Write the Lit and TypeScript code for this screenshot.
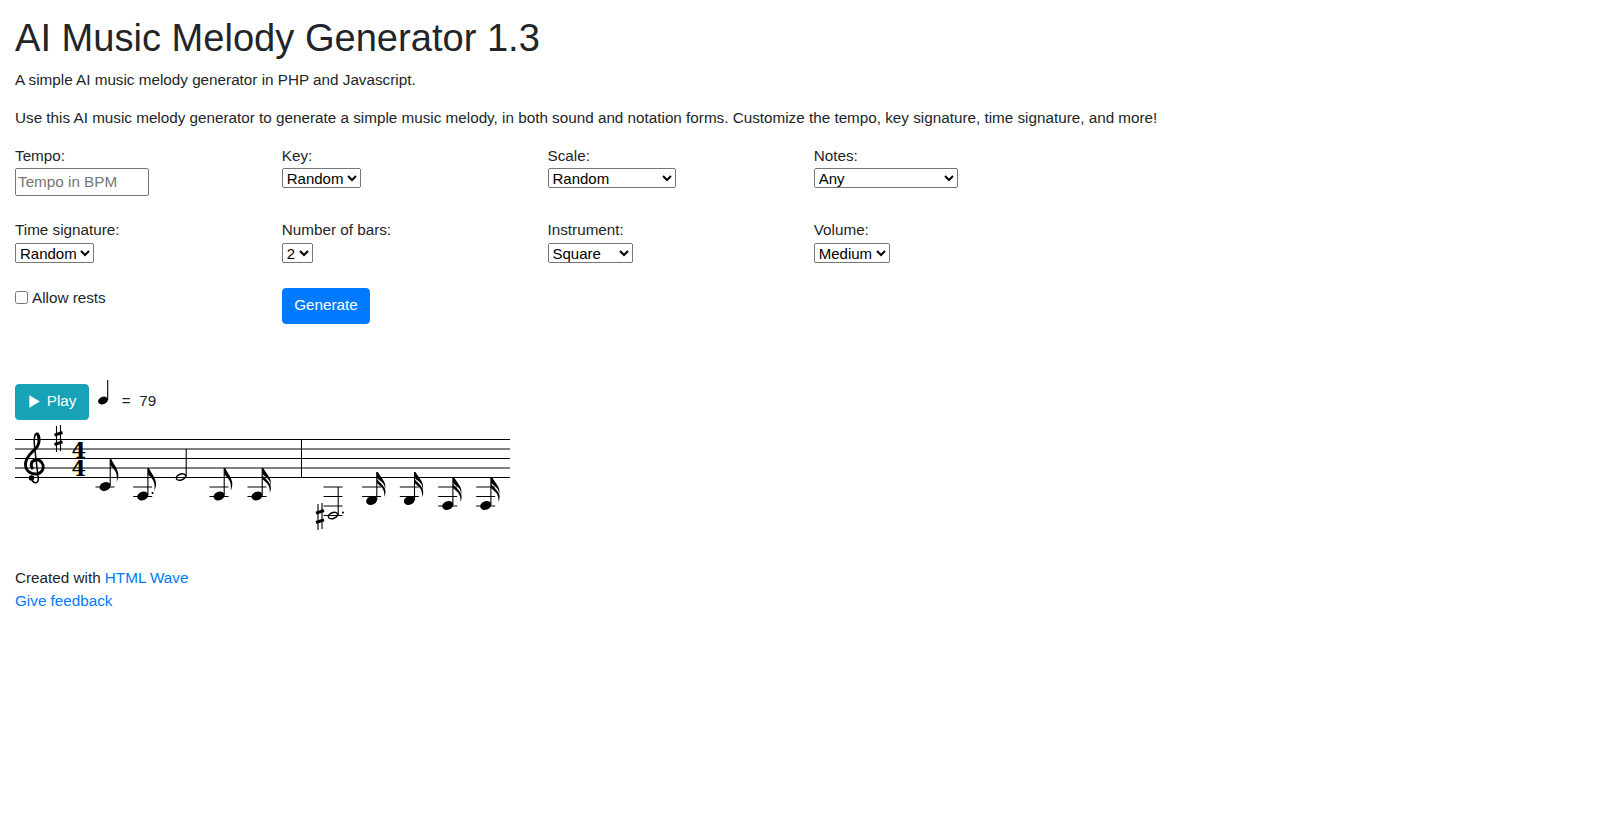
import { LitElement, html, css, svg } from "lit";
import { customElement } from "lit/decorators.js";

interface Note {
  x: number;
  y: number;
  half?: boolean;
  flags: number;
  top: number;
  ledgers: number[];
  dot?: boolean;
}

const NOTES: Note[] = [
  { x: 105, y: 486.5, flags: 1, top: 459, ledgers: [487] },
  { x: 142.7, y: 496, flags: 1, top: 468, ledgers: [487, 496.5], dot: true },
  { x: 181, y: 477, half: true, flags: 0, top: 449, ledgers: [] },
  { x: 219, y: 496, flags: 1, top: 468, ledgers: [487, 496.5] },
  { x: 257, y: 496, flags: 2, top: 468, ledgers: [487, 496.5] },
  { x: 333, y: 515.5, half: true, flags: 0, top: 487, ledgers: [487, 496.5, 506, 515.5], dot: true },
  { x: 371.6, y: 500.5, flags: 2, top: 472, ledgers: [487, 496.5] },
  { x: 409.3, y: 500.5, flags: 2, top: 472, ledgers: [487, 496.5] },
  { x: 447.7, y: 505.5, flags: 2, top: 477, ledgers: [487, 496.5, 506] },
  { x: 485.7, y: 505.5, flags: 2, top: 477, ledgers: [487, 496.5, 506] },
];

const STAFF = [439.5, 449, 458.5, 468, 477.5];

function sharp(x: number, cy: number, h: number) {
  const t = cy - h / 2;
  const b = cy + h / 2;
  return svg`
    <path d="M${x - 2} ${t + 1}V${b}M${x + 2} ${t}V${b - 1}" stroke="#000" stroke-width="1.1" fill="none"/>
    <path d="M${x - 4} ${cy - 3.4}L${x + 4} ${cy - 6}M${x - 4} ${cy + 6}L${x + 4} ${cy + 3.4}" stroke="#000" stroke-width="3" fill="none"/>`;
}

function flag(x: number, y: number) {
  return `M${x} ${y}V${y + 6}C${x + 3} ${y + 10} ${x + 8} ${y + 12} ${x + 6.5} ${y + 23}C${x + 11} ${y + 13} ${x + 5.5} ${y + 9} ${x + 1} ${y}Z`;
}

function flag16(x: number, y: number) {
  return `M${x} ${y}V${y + 6}C${x + 3} ${y + 9} ${x + 9} ${y + 11} ${x + 8} ${y + 18}C${x + 10.5} ${y + 11} ${x + 5} ${y + 7} ${x + 1} ${y}Z`
    + `M${x} ${y + 7}V${y + 11}C${x + 3} ${y + 14} ${x + 8.5} ${y + 16} ${x + 7.5} ${y + 25}C${x + 11.5} ${y + 16} ${x + 5} ${y + 13} ${x} ${y + 7}Z`;
}

function renderNote(n: Note) {
  const sx = n.x + 5.2;
  return svg`
    ${n.ledgers.map((l) => svg`<line x1=${n.x - 9.5} x2=${n.x + 9.5} y1=${l} y2=${l} stroke="#000" stroke-width="1"/>`)}
    ${n.half
      ? svg`<ellipse cx=${n.x} cy=${n.y} rx="4.8" ry="2.9" transform="rotate(-20 ${n.x} ${n.y})" fill="none" stroke="#000" stroke-width="1.5"/>`
      : svg`<ellipse cx=${n.x} cy=${n.y} rx="5.6" ry="4.2" transform="rotate(-20 ${n.x} ${n.y})" fill="#000"/>`}
    <line x1=${sx} x2=${sx} y1=${n.top} y2=${n.y - 0.5} stroke="#000" stroke-width="1.1"/>
    ${n.flags === 1 ? svg`<path d=${flag(sx, n.top)} fill="#000"/>` : ""}
    ${n.flags === 2 ? svg`<path d=${flag16(sx, n.top)} fill="#000"/>` : ""}
    ${n.dot ? svg`<circle cx=${n.x + 9.9} cy=${n.y - 3} r="1.1" fill="#000"/>` : ""}
  `;
}

@customElement("app-root")
export class AppRoot extends LitElement {
  static styles = css`
    :host {
      display: block;
      font-family: "Liberation Sans", Arial, sans-serif;
      font-size: 15.25px;
      line-height: 22.8px;
      color: #212529;
      background: #fff;
    }
    .page {
      padding: 16px 15px 0;
      min-height: 818px;
      box-sizing: content-box;
    }
    h1 {
      margin: 0 0 7.6px;
      font-size: 38.1px;
      font-weight: 500;
      line-height: 45.6px;
    }
    p {
      margin: 0 0 15.2px;
    }
    .form {
      display: grid;
      grid-template-columns: 266.75px 265.75px 266.25px 266.25px;
      grid-template-rows: 73.6px 68px 36.6px;
    }
    label {
      display: block;
    }
    select {
      display: block;
      box-sizing: border-box;
      height: 20px;
      font-family: inherit;
      font-size: 15px;
      color: #000;
      margin: 0.5px 0 0;
    }
    .second select {
      margin-top: 1.3px;
    }
    .w-scale {
      width: 128px;
    }
    .w-notes {
      width: 144px;
    }
    .w-inst {
      width: 85px;
    }
    input.text {
      display: block;
      box-sizing: border-box;
      width: 133.5px;
      height: 28px;
      font: inherit;
      margin: 0;
      padding: 1px 2px;
      border: 1px solid #767676;
      border-radius: 2px;
    }
    input.text::placeholder {
      color: #757575;
    }
    .rests {
      display: flex;
      align-items: center;
      gap: 4px;
      height: 22.8px;
    }
    .rests input {
      width: 13px;
      height: 13px;
      margin: 0 0 1.5px;
    }
    .btn {
      font: inherit;
      color: #fff;
      border: 1px solid transparent;
      border-radius: 3.8px;
      padding: 5.7px 11.4px;
      box-sizing: border-box;
      margin: 0;
      display: inline-flex;
      align-items: center;
    }
    .primary {
      background: #007bff;
      border-color: #007bff;
      margin-top: 1px;
    }
    .info {
      background: #17a2b8;
      border-color: #17a2b8;
      gap: 6.8px;
      padding-left: 13px;
    }
    .player {
      display: flex;
      align-items: flex-start;
      margin-top: 60.3px;
    }
    .tempo-note {
      display: block;
      margin: -3.5px 0 0 9px;
    }
    .tempo {
      margin: 6.5px 0 0 10px;
      white-space: pre;
    }
    .score {
      display: block;
      margin-top: 5.1px;
    }
    .footer {
      margin-top: 32.5px;
    }
    a {
      color: #007bff;
      text-decoration: none;
    }
  `;

  render() {
    return html`
      <div class="page">
        <h1>AI Music Melody Generator 1.3</h1>
        <p>A simple AI music melody generator in PHP and Javascript.</p>
        <p>Use this AI music melody generator to generate a simple music melody, in both sound and notation forms. Customize the tempo, key signature, time signature, and more!</p>
        <div class="form">
          <div><label>Tempo:</label><input class="text" type="text" placeholder="Tempo in BPM" /></div>
          <div><label>Key:</label><select><option>Random</option><option>C</option><option>G</option></select></div>
          <div><label>Scale:</label><select class="w-scale"><option>Random</option><option>Major</option><option>Minor</option></select></div>
          <div><label>Notes:</label><select class="w-notes"><option>Any</option></select></div>
          <div class="second"><label>Time signature:</label><select><option>Random</option><option>4/4</option></select></div>
          <div class="second"><label>Number of bars:</label><select><option>2</option><option>4</option></select></div>
          <div class="second"><label>Instrument:</label><select class="w-inst"><option>Square</option><option>Sine</option></select></div>
          <div class="second"><label>Volume:</label><select><option>Medium</option><option>Low</option><option>High</option></select></div>
          <div class="rests"><input type="checkbox" id="r" /><label for="r">Allow rests</label></div>
          <div><button class="btn primary">Generate</button></div>
        </div>
        <div class="player">
          <button class="btn info">
            <svg width="11" height="13" viewBox="0 0 11 13"><path d="M0.3 0.3L10.8 6.5L0.3 12.7Z" fill="#fff"/></svg>
            Play
          </button>
          <svg class="tempo-note" width="14" height="28" viewBox="0 0 14 28">
            <line x1="9.7" x2="9.7" y1="0" y2="20" stroke="#000" stroke-width="1.1"/>
            <ellipse cx="5" cy="20.5" rx="5" ry="3.7" transform="rotate(-20 5 20.5)" fill="#000"/>
          </svg>
          <span class="tempo">=  79</span>
        </div>
        <svg class="score" width="495" height="110" viewBox="15 425 495 110">
          ${STAFF.map((y) => svg`<line x1="15" x2="510" y1=${y} y2=${y} stroke="#000" stroke-width="1"/>`)}
          <line x1="301.5" x2="301.5" y1="439" y2="478" stroke="#000" stroke-width="1"/>
          <path d="M32 479C33 484 38.5 484 38.3 479L34.5 446C33.5 438 35 433.5 37 433" fill="none" stroke="#000" stroke-width="1.5"/>
          <path d="M37 433C40.5 438 40 446 33 451C28 456 25 460 25.5 465C26 472 32 474.5 37 474C42 473 44 469 43 465C42 461 38 459 35 460C31 461 30 466 33 469" fill="none" stroke="#000" stroke-width="2.9"/>
          <circle cx="31.5" cy="478" r="2.8" fill="#000"/>
          ${sharp(58.5, 438.5, 27)}
          <text x="71.5" y="457.5" font-family="DejaVu Serif" font-weight="700" font-size="23" textLength="14.5" lengthAdjust="spacingAndGlyphs" fill="#000">4</text>
          <text x="71.5" y="476" font-family="DejaVu Serif" font-weight="700" font-size="23" textLength="14.5" lengthAdjust="spacingAndGlyphs" fill="#000">4</text>
          ${NOTES.map(renderNote)}
          ${sharp(320, 516.5, 27)}
        </svg>
        <div class="footer">
          <div>Created with <a href="#">HTML Wave</a></div>
          <div><a href="#">Give feedback</a></div>
        </div>
      </div>
    `;
  }
}
